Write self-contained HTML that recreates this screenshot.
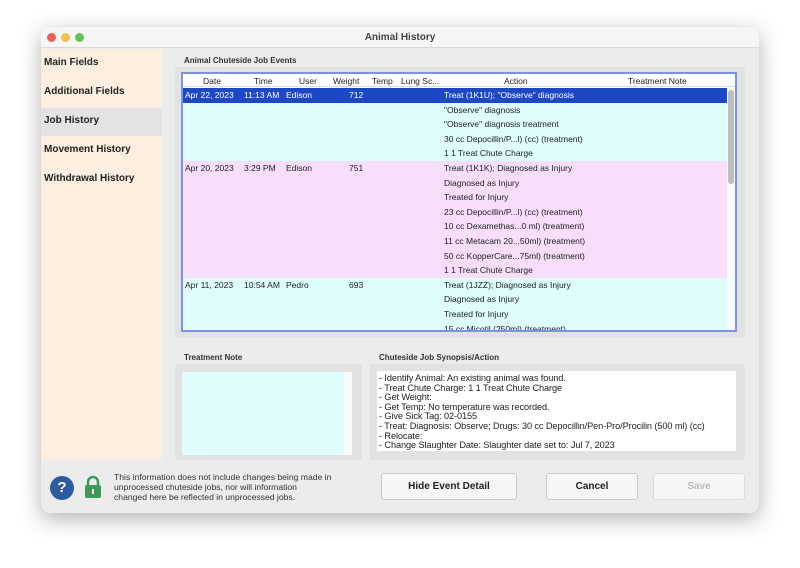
<!DOCTYPE html>
<html><head><style>
*{margin:0;padding:0;box-sizing:border-box}
body{width:800px;height:568px;background:#fff;font-family:"Liberation Sans",sans-serif;position:relative;overflow:hidden}
.a{position:absolute}
.win{left:41px;top:27px;width:718px;height:486px;background:#ececec;border-radius:9px;box-shadow:0 6px 22px rgba(0,0,0,.3);overflow:hidden}
.tb{left:0;top:0;width:718px;height:21px;background:#f6f6f6;border-bottom:1px solid #d8d8d8;text-align:center;font-size:10px;font-weight:bold;color:#444;line-height:21px}
.dot{width:9px;height:9px;border-radius:50%;top:6px}
.side{left:0;top:22px;width:121px;height:411px;background:#fcefe0}
.si{left:3px;font-size:10px;font-weight:bold;color:#222}
.lbl{font-size:8px;font-weight:bold;color:#333}
.t{font-size:8.5px;color:#222;white-space:nowrap}
.btn{background:#f6f6f6;border:1px solid #c8c8c8;border-radius:3px;font-size:10px;font-weight:bold;text-align:center;line-height:25px;color:#222}
</style></head><body>
<div class="a win">
 <div class="a tb">Animal History</div>
 <div class="a dot" style="left:6px;background:#ec5f57"></div>
 <div class="a dot" style="left:20px;background:#f4bd4f"></div>
 <div class="a dot" style="left:34px;background:#5fc454"></div>
 <div class="a side">
  <div class="a si" style="top:8px">Main Fields</div>
  <div class="a si" style="top:37px">Additional Fields</div>
  <div class="a" style="left:0;top:59px;width:121px;height:28px;background:#e3e3e3"></div>
  <div class="a si" style="top:66px">Job History</div>
  <div class="a si" style="top:95px">Movement History</div>
  <div class="a si" style="top:124px">Withdrawal History</div>
 </div>
 <div class="a lbl" style="left:143px;top:29px">Animal Chuteside Job Events</div>
 <div class="a" style="left:134px;top:40px;width:570px;height:271px;background:#e2e2e2;border-radius:3px"></div>
 <div class="a" style="left:140px;top:45px;width:556px;height:260px;background:#fff;border:2px solid #7b93e0;overflow:hidden">
  <div class="a t" style="top:1px;left:0;width:552px;height:12px;background:#fff;border-bottom:1px solid #ddd"></div>
  <div class="a t" style="top:2px;left:20px">Date</div>
  <div class="a t" style="top:2px;left:71px">Time</div>
  <div class="a t" style="top:2px;left:116px">User</div>
  <div class="a t" style="top:2px;left:150px">Weight</div>
  <div class="a t" style="top:2px;left:189px">Temp</div>
  <div class="a t" style="top:2px;left:218px">Lung Sc...</div>
  <div class="a t" style="top:2px;left:321px">Action</div>
  <div class="a t" style="top:2px;left:445px">Treatment Note</div>
  <div class="a" style="left:0;top:14px;width:544px;height:73px;background:#e0fdfe"></div>
  <div class="a" style="left:0;top:14px;width:544px;height:14.6px;background:#1c48c4"></div>
  <div class="a" style="left:0;top:87px;width:544px;height:117px;background:#f8defa"></div>
  <div class="a" style="left:0;top:204px;width:544px;height:60px;background:#e0fdfe"></div>
  <div class="a" style="left:544px;top:14px;width:10px;height:250px;background:#fafafa"></div>
  <div class="a" style="left:545px;top:16px;width:6px;height:94px;background:#bdbdbd;border-radius:3px"></div>
  <div class="a t" style="top:16px;left:2px;color:#fff">Apr 22, 2023</div>
  <div class="a t" style="top:16px;left:61px;color:#fff">11:13 AM</div>
  <div class="a t" style="top:16px;left:103px;color:#fff">Edison</div>
  <div class="a t" style="top:16px;left:166px;color:#fff">712</div>
  <div class="a t" style="top:16px;left:261px;color:#fff">Treat (1K1U); "Observe" diagnosis</div>
  <div class="a t" style="top:30.6px;left:261px">"Observe" diagnosis</div>
  <div class="a t" style="top:45.2px;left:261px">"Observe" diagnosis treatment</div>
  <div class="a t" style="top:59.8px;left:261px">30 cc Depocillin/P...l) (cc) (treatment)</div>
  <div class="a t" style="top:74.4px;left:261px">1 1 Treat Chute Charge</div>
  <div class="a t" style="top:89px;left:2px">Apr 20, 2023</div>
  <div class="a t" style="top:89px;left:61px">3:29 PM</div>
  <div class="a t" style="top:89px;left:103px">Edison</div>
  <div class="a t" style="top:89px;left:166px">751</div>
  <div class="a t" style="top:89px;left:261px">Treat (1K1K); Diagnosed as Injury</div>
  <div class="a t" style="top:103.6px;left:261px">Diagnosed as Injury</div>
  <div class="a t" style="top:118.2px;left:261px">Treated for Injury</div>
  <div class="a t" style="top:132.8px;left:261px">23 cc Depocillin/P...l) (cc) (treatment)</div>
  <div class="a t" style="top:147.4px;left:261px">10 cc Dexamethas...0 ml) (treatment)</div>
  <div class="a t" style="top:162px;left:261px">11 cc Metacam 20...50ml) (treatment)</div>
  <div class="a t" style="top:176.6px;left:261px">50 cc KopperCare...75ml) (treatment)</div>
  <div class="a t" style="top:191.2px;left:261px">1 1 Treat Chute Charge</div>
  <div class="a t" style="top:205.8px;left:2px">Apr 11, 2023</div>
  <div class="a t" style="top:205.8px;left:61px">10:54 AM</div>
  <div class="a t" style="top:205.8px;left:103px">Pedro</div>
  <div class="a t" style="top:205.8px;left:166px">693</div>
  <div class="a t" style="top:205.8px;left:261px">Treat (1JZZ); Diagnosed as Injury</div>
  <div class="a t" style="top:220.4px;left:261px">Diagnosed as Injury</div>
  <div class="a t" style="top:235px;left:261px">Treated for Injury</div>
  <div class="a t" style="top:249.6px;left:261px">15 cc Micotil (250ml) (treatment)</div>
 </div>
 <div class="a lbl" style="left:143px;top:326px">Treatment Note</div>
 <div class="a lbl" style="left:338px;top:326px">Chuteside Job Synopsis/Action</div>
 <div class="a" style="left:134px;top:337px;width:187px;height:96px;background:#e2e2e2;border-radius:3px"></div>
 <div class="a" style="left:141px;top:345px;width:162px;height:83px;background:#e0fdfe"></div>
 <div class="a" style="left:303px;top:345px;width:8px;height:83px;background:#fafafa"></div>
 <div class="a" style="left:329px;top:337px;width:375px;height:96px;background:#e2e2e2;border-radius:3px"></div>
 <div class="a" style="left:336px;top:344px;width:359px;height:80px;background:#fff"></div>
 <div class="a t" style="left:338px;top:347px;line-height:9.6px;font-size:9.2px;letter-spacing:-0.1px">- Identify Animal: An existing animal was found.<br>- Treat Chute Charge: 1 1 Treat Chute Charge<br>- Get Weight:<br>- Get Temp: No temperature was recorded.<br>- Give Sick Tag: 02-0155<br>- Treat: Diagnosis: Observe; Drugs: 30 cc Depocillin/Pen-Pro/Procilin (500 ml) (cc)<br>- Relocate:<br>- Change Slaughter Date: Slaughter date set to: Jul 7, 2023</div>
 <div class="a" style="left:9px;top:449px;width:24px;height:24px;border-radius:50%;background:#2d5c9c;color:#fff;font-weight:bold;font-size:15px;text-align:center;line-height:24px">?</div>
 <svg class="a" style="left:43px;top:448px" width="18" height="24" viewBox="0 0 18 24"><path d="M4 11V7a5 5 0 0 1 10 0v4" fill="none" stroke="#3f9a5a" stroke-width="2.5"/><rect x="1" y="10" width="16" height="13" rx="2" fill="#3f9a5a"/><rect x="8" y="14" width="2" height="5" fill="#fff"/></svg>
 <div class="a t" style="left:73px;top:446px;font-size:8.6px;line-height:9.8px;color:#333">This information does not include changes being made in<br>unprocessed chuteside jobs, nor will information<br>changed here be reflected in unprocessed jobs.</div>
 <div class="a btn" style="left:340px;top:446px;width:136px;height:27px">Hide Event Detail</div>
 <div class="a btn" style="left:505px;top:446px;width:92px;height:27px">Cancel</div>
 <div class="a btn" style="left:612px;top:446px;width:92px;height:27px;color:#bbb;border-color:#ddd">Save</div>
</div>
</body></html>
